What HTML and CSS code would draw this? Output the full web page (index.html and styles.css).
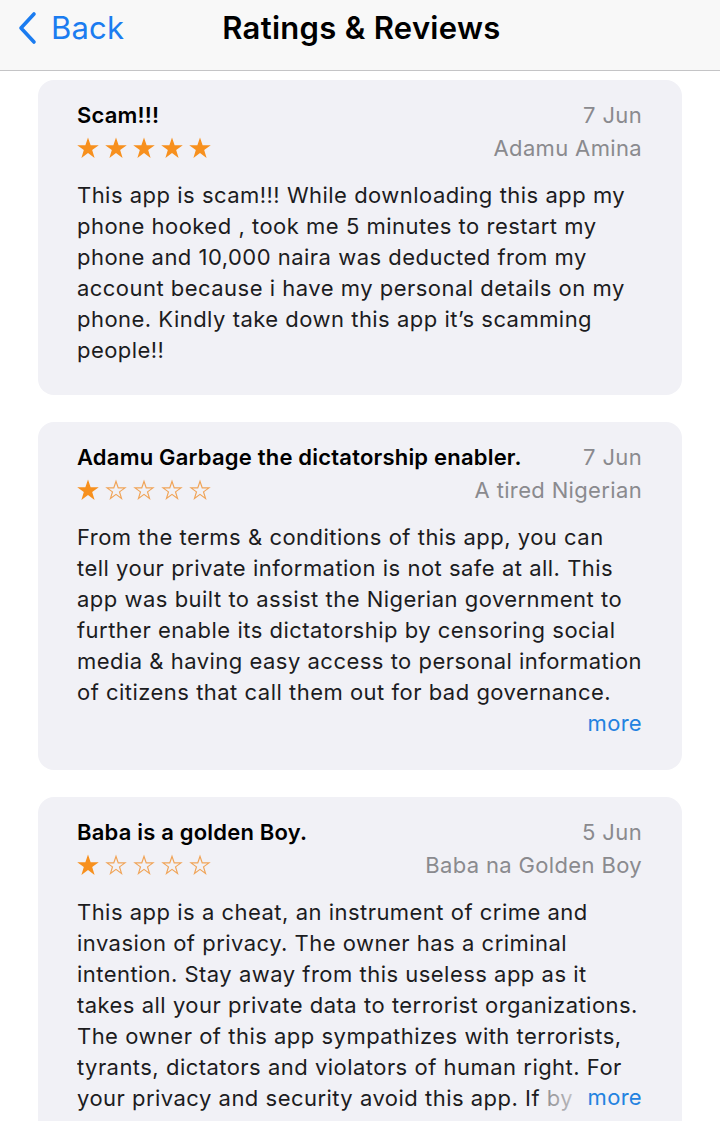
FILE: index.html
```html
<!DOCTYPE html>
<html lang="en">
<head>
  <meta charset="UTF-8" />
  <meta name="viewport" content="width=device-width, initial-scale=1" />
  <title>Ratings &amp; Reviews</title>
  <link rel="stylesheet" href="styles.css">
</head>
<body>

  <header class="nav">
    <a class="back" href="#">
      <svg class="chevron" viewBox="0 0 22 34" width="22" height="34" aria-hidden="true">
        <path d="M18 3 L5 17 L18 31" fill="none" stroke="currentColor" stroke-width="3.6" stroke-linecap="round" stroke-linejoin="round"/>
      </svg>
      <span>Back</span>
    </a>
    <h1 class="nav-title">Ratings &amp; Reviews</h1>
  </header>

  <main class="reviews">

    <article class="review">
      <div class="review-row">
        <h2 class="review-title">Scam!!!</h2>
        <span class="date">7 Jun</span>
      </div>
      <div class="review-row second">
        <div class="stars" aria-label="5 stars">
          <span class="star on"></span><span class="star on"></span><span class="star on"></span><span class="star on"></span><span class="star on"></span>
        </div>
        <span class="author">Adamu Amina</span>
      </div>
      <p class="review-body">This app is scam!!! While downloading this app my phone hooked , took me 5 minutes to restart my phone and 10,000 naira was deducted from my account because i have my personal details on my phone. Kindly take down this app it’s scamming people!!</p>
    </article>

    <article class="review">
      <div class="review-row">
        <h2 class="review-title">Adamu Garbage the dictatorship enabler.</h2>
        <span class="date">7 Jun</span>
      </div>
      <div class="review-row second">
        <div class="stars" aria-label="1 star">
          <span class="star on"></span><span class="star"></span><span class="star"></span><span class="star"></span><span class="star"></span>
        </div>
        <span class="author">A tired Nigerian</span>
      </div>
      <p class="review-body">From the terms &amp; conditions of this app, you can tell your private information is not safe at all. This app was built to assist the Nigerian government to further enable its dictatorship by censoring social media &amp; having easy access to personal information of citizens that call them out for bad governance.</p>
      <div class="more-row"><a class="more" href="#">more</a></div>
    </article>

    <article class="review">
      <div class="review-row">
        <h2 class="review-title">Baba is a golden Boy.</h2>
        <span class="date">5 Jun</span>
      </div>
      <div class="review-row second">
        <div class="stars" aria-label="1 star">
          <span class="star on"></span><span class="star"></span><span class="star"></span><span class="star"></span><span class="star"></span>
        </div>
        <span class="author">Baba na Golden Boy</span>
      </div>
      <div class="clamp">
        <p class="review-body">This app is a cheat, an instrument of crime and invasion of privacy. The owner has a criminal intention. Stay away from this useless app as it takes all your private data to terrorist organizations. The owner of this app sympathizes with terrorists, tyrants, dictators and violators of human right. For your privacy and security avoid this app. If by any chance you have downloaded it, delete it now and change your passwords.</p>
        <a class="more fade" href="#">more</a>
      </div>
    </article>

  </main>

</body>
</html>
```

FILE: styles.css
```css
* {
  margin: 0; padding: 0; box-sizing: border-box;
}
body {
  background: #fff;
  font-family: 'Inter', 'Noto Sans', sans-serif;
  color: #1c1c1e;
  width: 720px;
  height: 1121px;
  overflow: hidden;
}

/* top bar */
.nav {
  height: 71px;
  background: #f8f8f8;
  border-bottom: 1px solid #c4c4c6;
  display: flex;
  align-items: center;
}
.back {
  display: flex;
  align-items: center;
  gap: 13px;
  padding-left: 16px;
  color: #1b7cf0;
  text-decoration: none;
  font-size: 31px;
  letter-spacing: 0.2px;
  margin-top: -15px;
}
.chevron {
  display: block;
}
.nav-title {
  margin-left: 98px;
  margin-top: -15px;
  font-size: 31px;
  font-weight: 600;
  color: #000;
  letter-spacing: 0.3px;
}

/* list */
.reviews {
  padding: 9px 38px 0;
  display: flex;
  flex-direction: column;
  gap: 27px;
}
.review {
  background: #f1f1f6;
  border-radius: 16px;
  padding: 20px 40px 29px 39px;
}
.review-row {
  display: flex;
  justify-content: space-between;
  align-items: center;
  gap: 16px;
  height: 30px;
}
.review-row.second {
  margin-top: 3px;
}
.review-title {
  font-size: 22px;
  font-weight: 600;
  line-height: 30px;
  letter-spacing: 0.2px;
  color: #000;
  white-space: nowrap;
}
.date,
.author {
  color: #8a8a8e;
  font-size: 22px;
  line-height: 30px;
  letter-spacing: 0.35px;
  white-space: nowrap;
}
.stars {
  display: flex;
  gap: 6px;
  align-items: center;
}
.star {
  width: 22px;
  height: 22px;
  background: #f7901e;
  clip-path: polygon(50% 2%, 62% 37%, 99% 37%, 69% 59%, 80% 95%, 50% 73%, 20% 95%, 31% 59%, 1% 37%, 38% 37%);
  position: relative;
}
.star:not(.on) {
  background: #f0a458;
}
.star:not(.on)::after {
  content: '';
  position: absolute;
  inset: 0;
  background: #f1f1f6;
  clip-path: polygon(50% 19%, 58.2% 42.8%, 83.3% 42.8%, 62.9% 57.7%, 70.4% 82.2%, 50% 67.2%, 29.6% 82.2%, 37.1% 57.7%, 16.7% 42.8%, 41.8% 42.8%);
}
.review-body {
  margin-top: 17px;
  font-size: 22px;
  line-height: 31px;
  letter-spacing: 0.45px;
  word-spacing: 0.2px;
  color: #1c1c1e;
}
.more-row {
  text-align: right;
  line-height: 31px;
}
.more {
  color: #2382e0;
  text-decoration: none;
  font-size: 22px;
  letter-spacing: 0.3px;
}

/* truncated review */
.clamp {
  position: relative;
  max-height: 234px;
  overflow: hidden;
}
.more.fade {
  position: absolute;
  right: 0;
  top: 202px;
  line-height: 31px;
  padding-left: 50px;
  background: linear-gradient(to right, rgba(241, 241, 246, 0) 0, rgba(241, 241, 246, 0.55) 8px, rgba(241, 241, 246, 0.7) 30px, #f1f1f6 42px);
}
```
